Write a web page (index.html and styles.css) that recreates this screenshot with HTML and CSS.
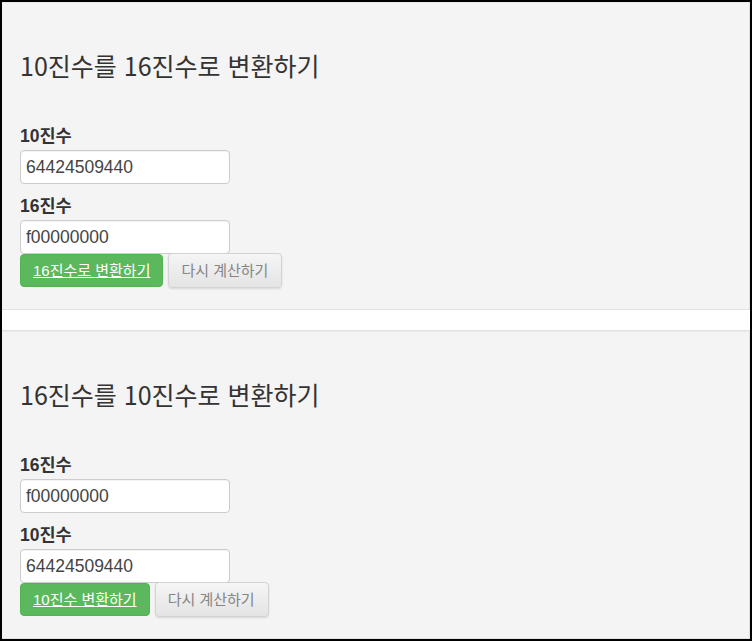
FILE: index.html
```html
<!DOCTYPE html>
<html lang="ko">
<head>
<meta charset="utf-8">
<title>진수 변환</title>
<link rel="stylesheet" href="styles.css">
</head>
<body>
<div class="frame"></div>
<section class="well">
  <h3 class="title">10진수를 16진수로 변환하기</h3>
  <label class="field-label">10진수</label>
  <input class="field" type="text" value="64424509440">
  <label class="field-label">16진수</label>
  <input class="field" type="text" value="f00000000">
  <div class="actions">
    <a class="btn btn-go" href="#">16진수로 변환하기</a>
    <button class="btn btn-reset" type="button">다시 계산하기</button>
  </div>
</section>
<section class="well">
  <h3 class="title">16진수를 10진수로 변환하기</h3>
  <label class="field-label">16진수</label>
  <input class="field" type="text" value="f00000000">
  <label class="field-label">10진수</label>
  <input class="field" type="text" value="64424509440">
  <div class="actions">
    <a class="btn btn-go" href="#">10진수 변환하기</a>
    <button class="btn btn-reset" type="button">다시 계산하기</button>
  </div>
</section>
</body>
</html>
```
FILE: styles.css
```css
html, body {
  margin: 0;
  padding: 0;
  background: #fff;
}
body {
  height: 641px;
  overflow: hidden;
  padding: 1px 2px 0 1px;
  box-sizing: border-box;
  font-family: "Liberation Sans", "Noto Sans CJK KR", sans-serif;
  color: #333;
}
.frame {
  position: fixed;
  left: 0;
  top: 0;
  right: 0;
  bottom: 0;
  border: 2px solid #000;
  pointer-events: none;
  z-index: 10;
}
.well {
  background: #f4f4f4;
  border: 1px solid #e1e1e1;
  box-shadow: inset 0 1px 1px rgba(0,0,0,.04);
  padding: 50px 18px 21px 18px;
  margin-bottom: 20px;
  display: flex;
  flex-direction: column;
  align-items: flex-start;
}
.title {
  margin: 0 0 48px 0;
  font-family: "Noto Sans CJK KR", sans-serif;
  font-size: 25px;
  font-weight: 400;
  line-height: 26px;
  color: #333;
}
.field-label {
  display: block;
  font-size: 17.5px;
  font-weight: bold;
  line-height: 20px;
  margin-bottom: 4px;
  color: #333;
}
.field {
  width: 210px;
  height: 34px;
  box-sizing: border-box;
  border: 1px solid #ccc;
  border-radius: 4px;
  padding: 0 5px;
  margin: 0 0 12px 0;
  font-family: "Liberation Sans", sans-serif;
  font-size: 17.5px;
  color: #444;
  background: #fff;
  box-shadow: inset 0 1px 1px rgba(0,0,0,.05);
}
.field:last-of-type {
  margin-bottom: 0;
}
.actions {
  display: flex;
  align-items: flex-start;
  gap: 5px;
}
.btn {
  box-sizing: border-box;
  border-radius: 4px;
  font-family: "Liberation Sans", "Noto Sans CJK KR", sans-serif;
  text-align: center;
  white-space: nowrap;
}
.btn-go {
  display: block;
  height: 33px;
  line-height: 31px;
  padding: 0 12px;
  background: #5cb85c;
  border: 1px solid #52b352;
  color: #fff;
  font-size: 15px;
  text-decoration: underline;
}
.btn-reset {
  height: 35px;
  margin-top: -1px;
  padding: 0 13px 0 12px;
  line-height: 33px;
  font-size: 15px;
  color: #858585;
  background: linear-gradient(to bottom, #f5f5f5 0%, #e4e4e4 100%);
  border: 1px solid #d3d3d3;
  box-shadow: 0 1px 2px rgba(0,0,0,.12);
}
```
